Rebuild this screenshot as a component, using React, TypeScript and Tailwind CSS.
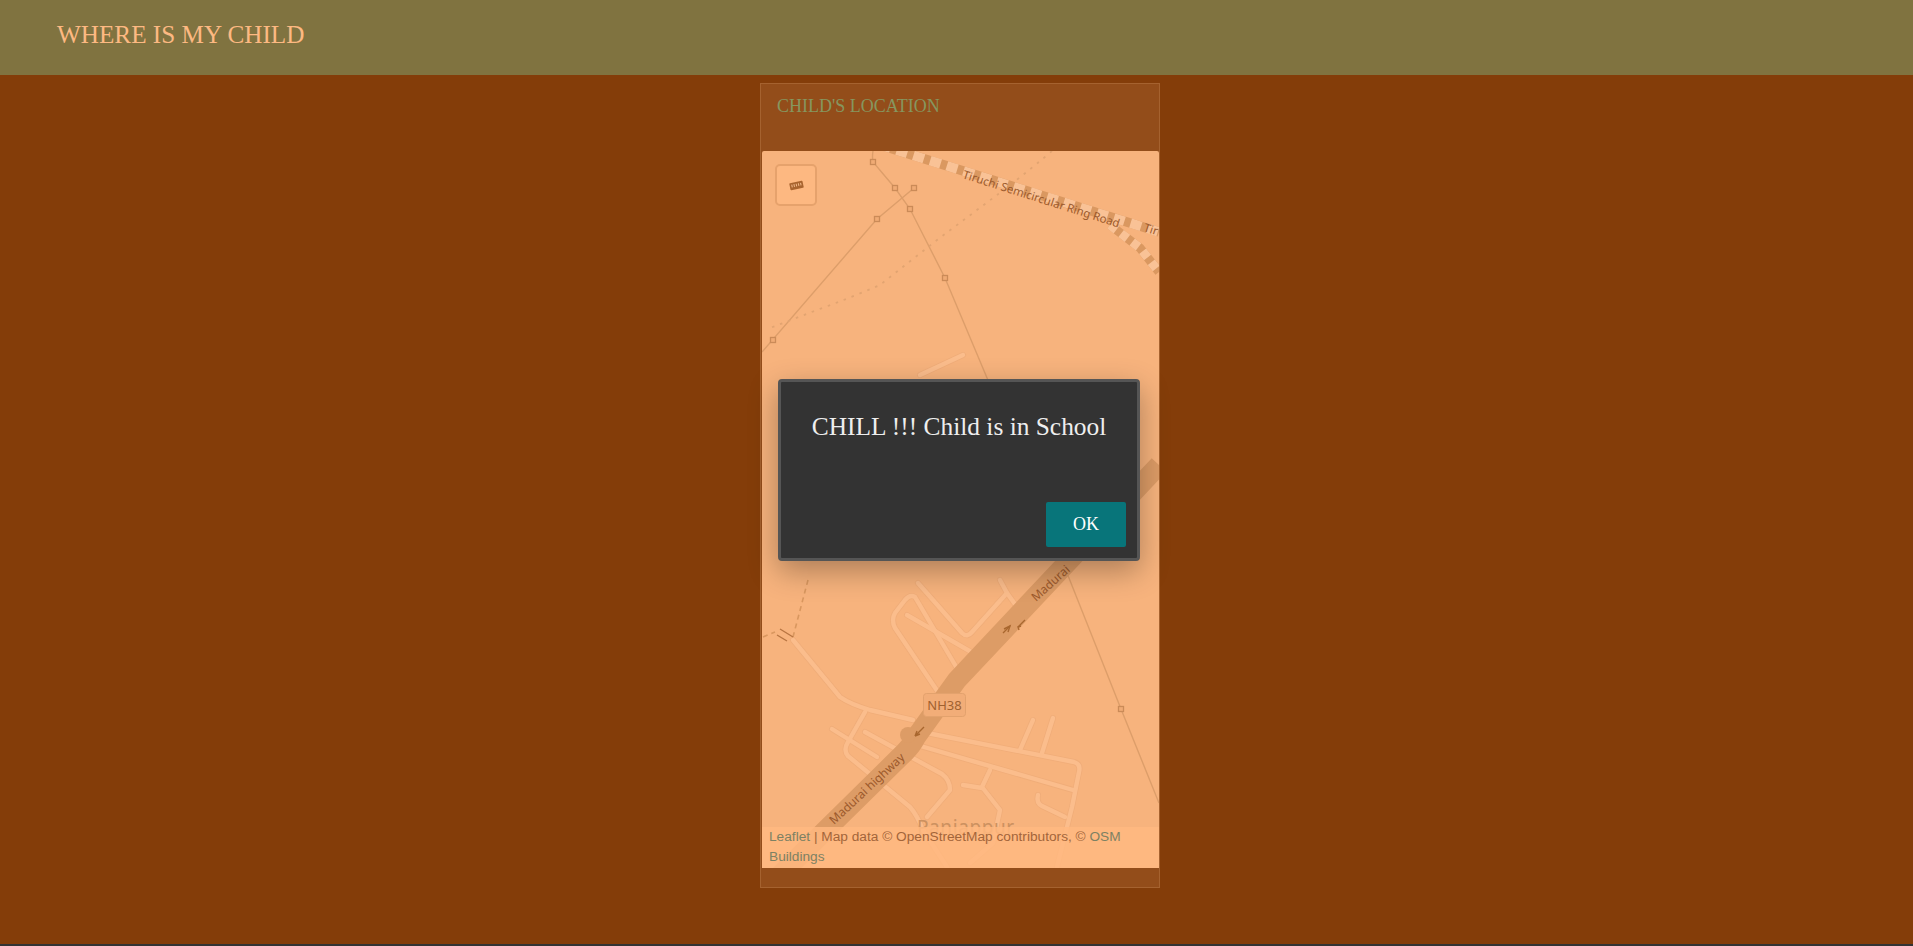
const minorRoads = [
  "M793 640 L840 697 Q850 704 870 710 L913 720",
  "M927 733 L1074 762 Q1081 764 1079 772 L1072 807 L1057 867",
  "M917 745 L1073 790",
  "M865 732 L942 774 Q950 780 950 790 L927 817",
  "M865 712 L848 742 Q843 750 848 756 L910 807 Q917 815 923 830 L947 867",
  "M832 729 L877 757",
  "M1033 720 L1020 750",
  "M1053 718 L1042 753",
  "M990 770 L982 787 L1000 810 L993 843 L970 863",
  "M963 785 L982 788",
  "M1038 795 Q1036 803 1042 806 L1065 817",
  "M907 615 L973 653",
  "M958 670 L915 597 Q910 594 905 600 L895 613 Q891 620 895 628 L938 692",
  "M918 583 L962 633 Q967 638 972 632 L1007 593 L1000 580",
  "M1007 593 L1017 607",
  "M963 355 L920 375",
];

const powerNodes = [
  [773, 340],
  [877, 219],
  [914, 188],
  [873, 162],
  [895, 188],
  [910, 209],
  [945, 278],
  [1121, 709],
];

function MapDrawing() {
  return (
    <svg viewBox="762 151 397 717" className="block h-[717px] w-[397px]" fill="none">
      <rect x="762" y="151" width="397" height="717" fill="#f7b37d" />

      <path d="M762 352 L877 219 L914 188" stroke="#dd9e6a" strokeWidth="1.4" />
      <path d="M873 151 Q872 157 873 162 L895 188 L910 209 L945 278 L990 385" stroke="#dd9e6a" strokeWidth="1.4" />
      <path d="M1067 573 L1121 709 L1159 803" stroke="#dd9e6a" strokeWidth="1.4" />
      {powerNodes.map(([x, y]) => (
        <rect key={`${x}-${y}`} x={x - 2.5} y={y - 2.5} width="5" height="5" fill="#f0ab75" stroke="#cb8b58" strokeWidth="1.3" />
      ))}
      <path
        d="M1052 151 Q1020 178 997 195 L937 240 L880 285 Q850 298 817 310 L770 328"
        stroke="#e2a471"
        strokeWidth="1.8"
        strokeDasharray="2.5 6"
      />

      <path d="M880 145 L1159 232" stroke="#da9860" strokeWidth="9.5" />
      <path d="M880 145 L1159 232" stroke="#f9c296" strokeWidth="9.5" strokeDasharray="11 6.5" />
      <path d="M1110 225 L1140 248 L1159 272" stroke="#da9860" strokeWidth="9" />
      <path d="M1110 225 L1140 248 L1159 272" stroke="#f9c296" strokeWidth="9" strokeDasharray="8 6" />

      {minorRoads.map((d) => (
        <path key={d} d={d} stroke="#f0ad79" strokeWidth="6" strokeLinecap="round" strokeLinejoin="round" />
      ))}
      {minorRoads.map((d) => (
        <path key={`${d}-fill`} d={d} stroke="#fbbd8c" strokeWidth="4.4" strokeLinecap="round" strokeLinejoin="round" />
      ))}

      <path d="M808 580 L793 637 M763 637 L775 632" stroke="#d9975f" strokeWidth="1.6" strokeDasharray="5 4" />
      <path d="M780 629 L793 637 M777 635 L787 641" stroke="#b87542" strokeWidth="1.4" />

      <path d="M775 880 L905 752 Q912 745 916 737 L957 680 L1159 465" stroke="#dd9c66" strokeWidth="20" strokeLinejoin="round" />
      <circle cx="908" cy="735" r="8" fill="#dd9c66" />
      <path d="M1003 633 L1010 626 M1018 627 L1025 620" stroke="#a9672f" strokeWidth="1.4" />
      <path d="M1004 629 L1010 626 L1008 632 M1019 630 L1018 627 L1021 626" stroke="#a9672f" strokeWidth="1.4" />
      <path d="M915 736 L924 727 M915 736 L917 731 M915 736 L920 734" stroke="#a9672f" strokeWidth="1.4" />

      <g fontFamily="'Noto Sans', sans-serif" fill="#9c5a2c">
        <text x="962" y="178" fontSize="11.5" transform="rotate(17.6 962 178)">Tiruchi Semicircular Ring Road</text>
        <text x="1143" y="231" fontSize="11.5" transform="rotate(17.6 1143 231)">Tir</text>
        <text x="834" y="825" fontSize="12" transform="rotate(-43 834 825)">Madurai highway</text>
        <text x="1036" y="602" fontSize="12" transform="rotate(-42 1036 602)">Madurai</text>
        <text x="917" y="834" fontSize="19" letterSpacing="0.6" fill="#cc9160">Panjappur</text>
      </g>

      <rect x="923.5" y="693.5" width="42" height="23" rx="3" fill="#f2ad78" stroke="#e3a26d" />
      <text x="944.5" y="710" fontSize="13" textAnchor="middle" fontFamily="'Noto Sans', sans-serif" fill="#a0612f">NH38</text>
    </svg>
  );
}

function RulerControl() {
  return (
    <div className="absolute left-[13px] top-[13px] flex h-[42px] w-[42px] items-center justify-center rounded-[5px] border-2 border-[#e6a26c] bg-[#fdb881]">
      <svg viewBox="0 0 16 10" className="h-[9px] w-[15px] -rotate-12">
        <rect x="0.5" y="1" width="15" height="8" rx="1" fill="#a9642f" />
        <path d="M3 3v3M5.5 3v3M8 3v3M10.5 3v3M13 3v3" stroke="#f4bd8f" strokeWidth="1.1" />
      </svg>
    </div>
  );
}

export default function App() {
  return (
    <div className="relative h-[946px] overflow-hidden border-b-2 border-[#333] bg-[#843d09] font-['Liberation_Serif',serif]">
      <header className="flex h-[75px] items-center bg-[#807340] pl-[57px]">
        <h1 className="mb-[5px] text-[25.2px] text-[#fdb982]">WHERE IS MY CHILD</h1>
      </header>

      <section className="ml-[760px] mt-2 w-[400px] border border-[#a5622f] bg-[#934d1a] pb-[19px] pl-px">
        <h2 className="h-[67px] pl-[15px] pt-[10px] text-[18px] leading-6 text-[#86965f]">CHILD'S LOCATION</h2>
        <div className="relative h-[717px] w-[397px] overflow-hidden rounded-t-[2px]">
          <MapDrawing />
          <RulerControl />
          <p className="absolute bottom-0 left-0 right-0 h-[41px] bg-[#ffb980]/85 pl-[7px] pr-2 font-['Liberation_Sans',sans-serif] text-[13.7px] leading-5 text-[#a3653a]">
            <span className="text-[#7d8163]">Leaflet</span> | Map data © OpenStreetMap contributors, © <span className="text-[#7d8163]">OSM Buildings</span>
          </p>
        </div>
      </section>

      <div className="absolute left-[778px] top-[379px] flex h-[182px] w-[362px] flex-col rounded-[4px] border-[3px] border-[#555] bg-[#333] px-[11px] pb-[11px] shadow-[0_10px_30px_rgba(0,0,0,0.3)]">
        <p className="pt-[30px] text-center text-[25.4px] leading-7 text-[#eee]">CHILL !!! Child is in School</p>
        <button className="ml-auto mt-auto h-[45px] w-20 rounded-[2px] bg-[#08757a] pb-[2px] text-lg text-white">OK</button>
      </div>
    </div>
  );
}
